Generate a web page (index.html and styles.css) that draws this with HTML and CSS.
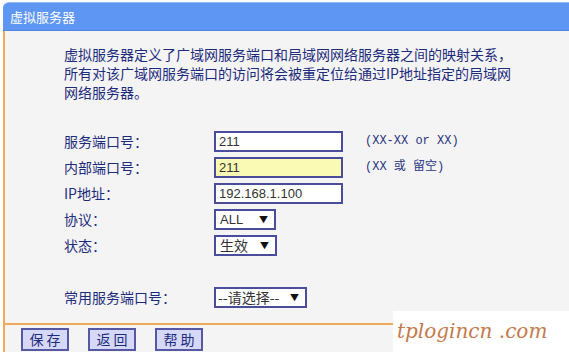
FILE: index.html
```html
<!DOCTYPE html>
<html lang="zh-CN">
<head>
<meta charset="utf-8">
<title>虚拟服务器</title>
<link rel="stylesheet" href="styles.css">
</head>
<body>
<div class="panel">
  <div class="header">虚拟服务器</div>
  <div class="content">
    <div class="desc">
      <div>虚拟服务器定义了广域网服务端口和局域网网络服务器之间的映射关系，</div>
      <div>所有对该广域网服务端口的访问将会被重定位给通过IP地址指定的局域网</div>
      <div>网络服务器。</div>
    </div>
    <div class="form">
      <div class="row">
        <span class="label">服务端口号：</span>
        <div class="input">211</div>
        <span class="hint">(XX-XX or XX)</span>
      </div>
      <div class="row">
        <span class="label">内部端口号：</span>
        <div class="input yellow">211</div>
        <span class="hint">(XX 或 留空)</span>
      </div>
      <div class="row">
        <span class="label">IP地址：</span>
        <div class="input">192.168.1.100</div>
      </div>
      <div class="row">
        <span class="label">协议：</span>
        <div class="select w-all"><span class="sel-text">ALL</span><span class="arrow">▼</span></div>
      </div>
      <div class="row">
        <span class="label">状态：</span>
        <div class="select w-status"><span class="sel-text cjk">生效</span><span class="arrow">▼</span></div>
      </div>
      <div class="row"></div>
      <div class="row">
        <span class="label">常用服务端口号：</span>
        <div class="select w-common"><span class="sel-text cjk">--请选择--</span><span class="arrow">▼</span></div>
      </div>
    </div>
    <div class="footer">
      <button class="btn">保 存</button>
      <button class="btn">返 回</button>
      <button class="btn">帮 助</button>
    </div>
  </div>
</div>
<div class="watermark">tplogincn .com</div>
</body>
</html>
```

FILE: styles.css
```css
html, body {
  margin: 0;
  padding: 0;
  background: #ffffff;
  width: 569px;
  height: 352px;
  overflow: hidden;
}
body {
  font-family: "Noto Sans CJK SC", "Noto Sans", sans-serif;
  color: #1d2b7c;
}
.panel {
  margin-top: 2px;
  margin-left: 3px;
  position: relative;
}
.header {
  height: 27px;
  background: #5e96f4;
  border-top: 1px solid #94b9f8;
  border-bottom: 1px solid #4f84e2;
  border-top-left-radius: 6px;
  color: #ffffff;
  font-size: 13px;
  line-height: 27px;
  padding-left: 7px;
}
.content {
  background: #f4f4f4;
  border-left: 2px solid #f2a95c;
  height: 321px;
  display: flex;
  flex-direction: column;
}
.desc {
  padding: 14px 0 0 59px;
  font-size: 14px;
  line-height: 19px;
  height: 86px;
}
.form {
  padding-left: 59px;
  display: flex;
  flex-direction: column;
}
.row {
  height: 26px;
  display: flex;
  align-items: flex-start;
}
.label {
  width: 150px;
  font-size: 14px;
  line-height: 21px;
}
.input {
  box-sizing: border-box;
  width: 129px;
  height: 21px;
  border: 2px solid #4a4c9c;
  background: #ffffff;
  font-family: "Liberation Sans", Arial, sans-serif;
  font-size: 13px;
  line-height: 17px;
  color: #333333;
  padding-left: 3px;
}
.input.yellow {
  background: #fafab4;
}
.hint {
  margin-left: 22px;
  font-family: "Liberation Mono", "Noto Sans CJK SC", monospace;
  font-size: 12px;
  line-height: 21px;
  color: #2a3580;
}
.select {
  box-sizing: border-box;
  height: 21px;
  border: 2px solid #4a4c9c;
  background: #ffffff;
  display: flex;
  align-items: center;
  justify-content: space-between;
  padding: 0 6px 0 4px;
  color: #333333;
}
.w-all { width: 62px; }
.w-status { width: 63px; }
.w-common { width: 93px; padding-left: 2px; }
.sel-text {
  font-family: "Liberation Sans", Arial, sans-serif;
  font-size: 13px;
  line-height: 17px;
}
.sel-text.cjk {
  font-family: "Noto Sans CJK SC", sans-serif;
  font-size: 14px;
}
.arrow {
  font-size: 9px;
  color: #111111;
  line-height: 17px;
}
.footer {
  margin-top: auto;
  border-top: 2px solid #f2a95c;
  height: 29px;
  display: flex;
  align-items: flex-start;
  gap: 19px;
  padding: 3px 0 0 16px;
  box-sizing: border-box;
}
.btn {
  box-sizing: border-box;
  width: 48px;
  height: 23px;
  background: #d6d8f8;
  border: 2px solid #5658a4;
  border-radius: 0;
  font-family: "Noto Sans CJK SC", sans-serif;
  font-size: 14px;
  line-height: 17px;
  color: #1d2b7c;
  padding: 0;
  margin: 0;
}
.watermark {
  position: absolute;
  left: 393px;
  top: 311px;
  width: 176px;
  height: 41px;
  background: #ffffff;
  font-family: "DejaVu Serif", "Liberation Serif", serif;
  font-style: italic;
  font-size: 20px;
  line-height: 41px;
  color: #c47a4c;
  padding-left: 4px;
  box-sizing: border-box;
  white-space: nowrap;
}
```
